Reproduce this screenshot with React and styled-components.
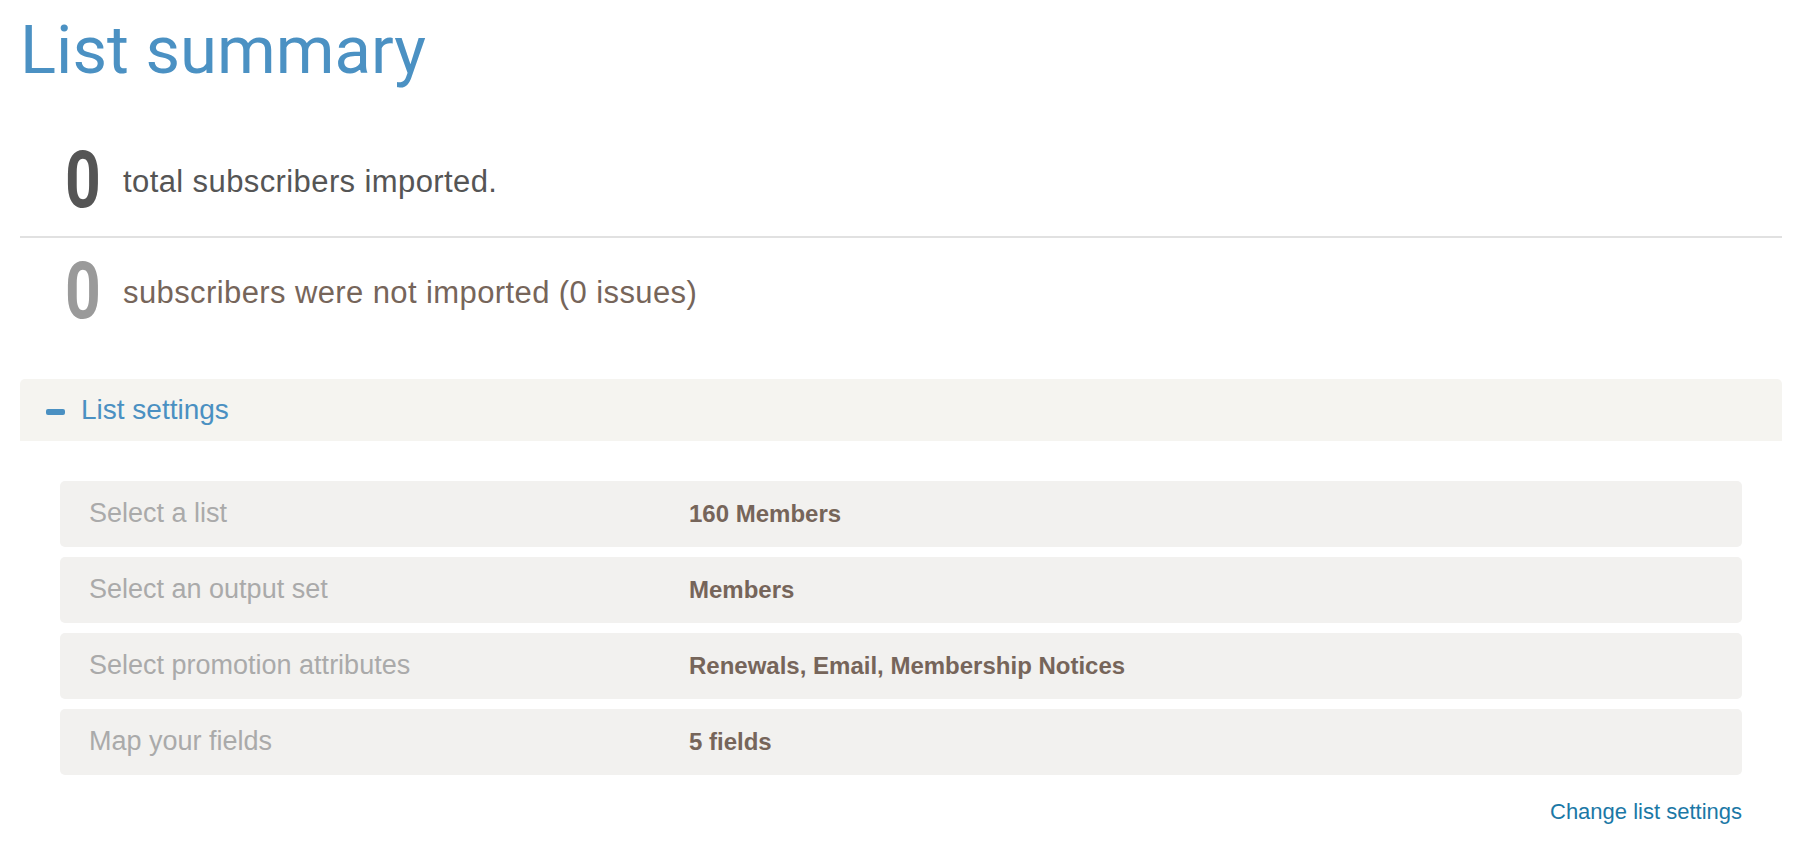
import React from "react";
import styled, { createGlobalStyle } from "styled-components";

const GlobalStyle = createGlobalStyle`
  html, body {
    margin: 0;
    padding: 0;
    background: #ffffff;
  }
  body {
    font-family: "Liberation Sans", Arial, sans-serif;
  }
`;

const Page = styled.div`
  padding: 0 20px 20px;
`;

const Title = styled.h1`
  margin: 0;
  padding-top: 10px;
  font-family: Roboto, "Liberation Sans", sans-serif;
  font-weight: 400;
  font-size: 67px;
  line-height: 80px;
  color: #4b91c3;
`;

const Stats = styled.div`
  margin-top: 37px;
`;

const StatRow = styled.div`
  display: flex;
  align-items: flex-start;
  gap: 22px;
  padding: 24px 0 27px 45px;
  border-bottom: ${(p) => (p.$divider ? "2px solid #e1e1e1" : "none")};
`;

const ZeroWrap = styled.div`
  width: 36px;
  height: 58px;
  display: flex;
  justify-content: center;
  flex-shrink: 0;
`;

const Zero = styled.span`
  display: block;
  font-family: Roboto, "Liberation Sans", sans-serif;
  font-weight: 700;
  font-size: 80px;
  line-height: 58px;
  transform: scaleX(0.78);
  color: ${(p) => p.$color};
`;

const StatText = styled.span`
  padding-top: 3px;
  font-size: 31px;
  letter-spacing: 0.4px;
  line-height: 55px;
  color: ${(p) => p.$color};
`;

const Panel = styled.section`
  margin-top: 32px;
`;

const PanelHeader = styled.div`
  height: 62px;
  display: flex;
  align-items: center;
  gap: 16px;
  padding-left: 26px;
  background: #f5f4f0;
  border-radius: 5px 5px 0 0;
`;

const MinusIcon = styled.span`
  display: block;
  width: 19px;
  height: 6px;
  margin-top: 3px;
  border-radius: 2px;
  background: #4a90c2;
`;

const PanelTitle = styled.span`
  font-size: 28px;
  line-height: 30px;
  color: #4a90c2;
`;

const PanelBody = styled.div`
  padding: 40px 40px 0;
  display: flex;
  flex-direction: column;
  gap: 10px;
`;

const SettingRow = styled.div`
  display: grid;
  grid-template-columns: 600px 1fr;
  align-items: baseline;
  height: 66px;
  box-sizing: border-box;
  padding: 17px 29px 0;
  background: #f2f1ef;
  border-radius: 5px;
`;

const SettingLabel = styled.span`
  font-size: 27px;
  line-height: 30px;
  color: #aaaaaa;
`;

const SettingValue = styled.span`
  font-size: 24px;
  font-weight: 700;
  line-height: 30px;
  color: #76655a;
`;

const Footer = styled.div`
  display: flex;
  justify-content: flex-end;
  padding: 24px 40px 0;
`;

const ChangeLink = styled.a`
  font-size: 22px;
  line-height: 26px;
  color: #1b78a6;
  text-decoration: none;
  cursor: pointer;
`;

const settings = [
  { label: "Select a list", value: "160 Members" },
  { label: "Select an output set", value: "Members" },
  { label: "Select promotion attributes", value: "Renewals, Email, Membership Notices" },
  { label: "Map your fields", value: "5 fields" },
];

export default function App() {
  return (
    <>
      <GlobalStyle />
      <Page>
        <Title>List summary</Title>
        <Stats>
          <StatRow $divider>
            <ZeroWrap>
              <Zero $color="#555555">0</Zero>
            </ZeroWrap>
            <StatText $color="#555555">total subscribers imported.</StatText>
          </StatRow>
          <StatRow>
            <ZeroWrap>
              <Zero $color="#9a9a9a">0</Zero>
            </ZeroWrap>
            <StatText $color="#76655a">subscribers were not imported (0 issues)</StatText>
          </StatRow>
        </Stats>
        <Panel>
          <PanelHeader>
            <MinusIcon />
            <PanelTitle>List settings</PanelTitle>
          </PanelHeader>
          <PanelBody>
            {settings.map((s) => (
              <SettingRow key={s.label}>
                <SettingLabel>{s.label}</SettingLabel>
                <SettingValue>{s.value}</SettingValue>
              </SettingRow>
            ))}
          </PanelBody>
          <Footer>
            <ChangeLink>Change list settings</ChangeLink>
          </Footer>
        </Panel>
      </Page>
    </>
  );
}
